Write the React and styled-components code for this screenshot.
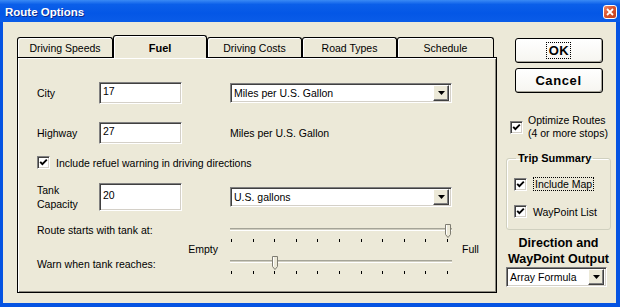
import styled, { createGlobalStyle } from "styled-components";

const GlobalStyle = createGlobalStyle`
  html, body { margin: 0; padding: 0; }
  body {
    width: 620px;
    height: 307px;
    overflow: hidden;
    font-family: "Liberation Sans", Arial, sans-serif;
    font-size: 10.5px;
    color: #000;
  }
`;

const Window = styled.div`
  width: 620px;
  height: 307px;
  display: flex;
  flex-direction: column;
  background: #0553e2;
`;

const TitleBar = styled.div`
  height: 22px;
  flex: none;
  box-sizing: border-box;
  display: flex;
  align-items: center;
  justify-content: space-between;
  padding: 1px 3px 0 5px;
  background: linear-gradient(180deg, #3a8af5 0%, #0b5fe9 20%, #0457e6 60%, #0a5ce8 100%);
  color: #fff;
  font-weight: bold;
  font-size: 11.5px;
  text-shadow: 1px 1px 0 #0b2a8f;
`;

const CloseButton = styled.div`
  width: 14px;
  height: 14px;
  box-sizing: border-box;
  border: 1px solid #fff;
  border-radius: 3px;
  background: linear-gradient(135deg, #f08a6a 0%, #d9542e 45%, #c23f1c 100%);
  display: flex;
  align-items: center;
  justify-content: center;
`;

const Frame = styled.div`
  flex: 1;
  min-height: 0;
  display: flex;
  padding: 0 4px 4px 3px;
`;

const Body = styled.div`
  flex: 1;
  background: #ece9d8;
  display: flex;
  align-items: flex-start;
  padding: 13px 0 0 14px;
`;

/* tab control */
const TabControl = styled.div`
  width: 480px;
  display: flex;
  flex-direction: column;
`;

const TabStrip = styled.div`
  height: 22px;
  display: flex;
  align-items: flex-end;
`;

const Tab = styled.div`
  position: relative;
  z-index: ${p => (p.$active ? 2 : 1)};
  width: ${p => p.$w}px;
  height: ${p => (p.$active ? 23 : 20)}px;
  margin-bottom: ${p => (p.$active ? -1 : 0)}px;
  box-sizing: border-box;
  border: 1px solid #000;
  border-bottom: none;
  border-radius: 3px 3px 0 0;
  box-shadow: inset 1px 1px 0 #fff;
  background: #ece9d8;
  display: flex;
  align-items: center;
  justify-content: center;
  padding-top: ${p => (p.$active ? 1 : 0)}px;
  font-weight: ${p => (p.$active ? "bold" : "normal")};
  font-size: ${p => (p.$active ? "11px" : "10.5px")};
`;

const Panel = styled.div`
  height: 236px;
  box-sizing: border-box;
  border: 1px solid #000;
  box-shadow: inset 1px 1px 0 #fff, inset -1px -1px 0 #8d8b80;
  padding: 24px 0 0 19px;
`;

const Row = styled.div`
  display: grid;
  grid-template-columns: 62px 83px 48px 222px;
  align-items: center;
  height: ${p => p.$h || 22}px;
  margin-top: ${p => p.$mt || 0}px;
`;

const Label = styled.span`
  line-height: 14px;
`;

const TextInput = styled.input`
  width: 83px;
  height: 100%;
  margin: 0;
  box-sizing: border-box;
  border: 1px solid;
  border-color: #808080 #fff #fff #808080;
  box-shadow: inset 1px 1px 0 #404040, inset -1px -1px 0 #d4d0c8;
  background: #fff;
  font: inherit;
  color: #000;
  padding: 0 3px 5px;
  outline: none;
`;

const SelectBox = styled.div`
  width: ${p => p.$w}px;
  height: 20px;
  box-sizing: border-box;
  border: 1px solid;
  border-color: #808080 #fff #fff #808080;
  box-shadow: inset 1px 1px 0 #404040, inset -1px -1px 0 #d4d0c8;
  background: #fff;
  display: flex;
  align-items: center;
  padding: 2px;
`;

const SelectText = styled.span`
  flex: 1;
  padding-left: 1px;
  white-space: nowrap;
  overflow: hidden;
`;

const DropButton = styled.span`
  width: 16px;
  height: 16px;
  box-sizing: border-box;
  background: #ece9d8;
  border: 1px solid;
  border-color: #fff #404040 #404040 #fff;
  box-shadow: inset -1px -1px 0 #808080;
  display: flex;
  align-items: center;
  justify-content: center;
`;

const PlainText = styled.span`
  white-space: nowrap;
`;

const CheckRow = styled.div`
  display: flex;
  align-items: center;
  gap: ${p => p.$gap || 6}px;
  margin-top: ${p => p.$mt || 0}px;
  padding-left: ${p => p.$pl || 0}px;
`;

const CheckBoxBox = styled.span`
  flex: none;
  width: 13px;
  height: 13px;
  box-sizing: border-box;
  border: 1px solid;
  border-color: #808080 #fff #fff #808080;
  box-shadow: inset 1px 1px 0 #404040, inset -1px -1px 0 #d4d0c8;
  background: #fff;
  display: flex;
  align-items: center;
  justify-content: center;
`;

const FocusText = styled.span`
  border: 1px dotted #000;
  padding: 0 1px;
  line-height: 12px;
`;

const TwoLine = styled.span`
  line-height: 13px;
`;

/* sliders */
const SliderGrid = styled.div`
  display: grid;
  grid-template-columns: 193px 222px 1fr;
  grid-template-rows: 19px 13px 19px;
  margin-top: 18px;
`;

const SliderLabel = styled.span`
  align-self: start;
  line-height: 13px;
  margin-top: ${p => p.$mt || 0}px;
`;

const EndLabel = styled.span`
  align-self: end;
  line-height: 13px;
  justify-self: ${p => (p.$right ? "end" : "start")};
  padding: ${p => (p.$right ? "0 12px 0 0" : "0 0 0 10px")};
`;

const SliderBox = styled.div`
  position: relative;
  padding-top: 4px;
`;

const Track = styled.div`
  width: 222px;
  height: 1px;
  border-top: 1px solid #a5a497;
  border-bottom: 1px solid #fff;
  background: #cfcdc0;
`;

const Thumb = styled.div`
  position: absolute;
  top: 0;
  width: 6px;
  height: 14px;
  display: flex;
`;

const Ticks = styled.div`
  width: 217px;
  margin: 8px 0 0 1px;
  display: flex;
  justify-content: space-between;
`;

const Tick = styled.span`
  width: 1px;
  height: 3px;
  background: #000;
`;

/* right column */
const Side = styled.div`
  width: 105px;
  margin-left: 9px;
  display: flex;
  flex-direction: column;
`;

const PushButton = styled.div`
  align-self: center;
  width: 88px;
  height: 25px;
  margin-top: ${p => p.$mt}px;
  box-sizing: border-box;
  border: 1px solid #000;
  border-radius: 3px;
  background: linear-gradient(180deg, #ffffff 0%, #f6f5f0 100%);
  box-shadow: inset -1px -1px 0 #a8a69a;
  display: flex;
  align-items: center;
  justify-content: center;
  font-weight: bold;
  font-size: 13px;
  letter-spacing: 0.6px;
`;

const FocusRect = styled.span`
  border: 1px dotted #000;
  padding: 1px 1px 1px 2px;
  line-height: 13px;
`;

const Group = styled.fieldset`
  margin: 12px 0 0 0;
  padding: 0 0 11px 7px;
  border: 1px solid #d0d0bf;
  border-radius: 3px;
  box-shadow: inset 1px 1px 0 #fff;
`;

const Legend = styled.legend`
  margin-left: 2px;
  padding: 0 2px;
  font-weight: bold;
  font-size: 11px;
  line-height: 13px;
`;

const OutputTitle = styled.div`
  margin-top: 5px;
  text-align: center;
  font-weight: bold;
  font-size: 12.5px;
  line-height: 16px;
`;

const Arrow = () => (
  <svg width="7" height="4" viewBox="0 0 7 4">
    <path d="M0 0H7L3.5 4Z" fill="#000" />
  </svg>
);

const Select = ({ w, children }) => (
  <SelectBox $w={w}>
    <SelectText>{children}</SelectText>
    <DropButton>
      <Arrow />
    </DropButton>
  </SelectBox>
);

const CheckBox = () => (
  <CheckBoxBox>
    <svg width="9" height="9" viewBox="0 0 9 9">
      <polyline points="1.2,3.8 3.4,6.2 7.8,1.6" fill="none" stroke="#000" strokeWidth="1.9" />
    </svg>
  </CheckBoxBox>
);

const Slider = ({ step }) => (
  <SliderBox>
    <Track />
    <Thumb style={{ left: step * 21.6 - 1.5 }}>
      <svg width="6" height="14" viewBox="0 0 6 14">
        <path d="M0.5 0.5H5.5V10.5L3 13.5L0.5 10.5Z" fill="#ece9d8" stroke="#7f7d72" />
        <path d="M1.5 1V10.3" stroke="#fff" />
      </svg>
    </Thumb>
    <Ticks>
      {Array.from({ length: 11 }).map((_, i) => (
        <Tick key={i} />
      ))}
    </Ticks>
  </SliderBox>
);

const tabs = [
  { name: "Driving Speeds", w: 96 },
  { name: "Fuel", w: 94, active: true },
  { name: "Driving Costs", w: 95 },
  { name: "Road Types", w: 95 },
  { name: "Schedule", w: 97 },
];

const App = () => {
  return (
    <Window>
      <GlobalStyle />
      <TitleBar>
        <span>Route Options</span>
        <CloseButton>
          <svg width="8" height="8" viewBox="0 0 8 8">
            <path d="M1 1L7 7M7 1L1 7" stroke="#fff" strokeWidth="1.8" />
          </svg>
        </CloseButton>
      </TitleBar>

      <Frame>
        <Body>
          <TabControl>
            <TabStrip>
              {tabs.map(t => (
                <Tab key={t.name} $w={t.w} $active={t.active}>
                  {t.name}
                </Tab>
              ))}
            </TabStrip>

            <Panel>
              <Row>
                <Label>City</Label>
                <TextInput readOnly defaultValue="17" />
                <span />
                <Select w={222}>Miles per U.S. Gallon</Select>
              </Row>

              <Row $mt={18}>
                <Label>Highway</Label>
                <TextInput readOnly defaultValue="27" />
                <span />
                <PlainText>Miles per U.S. Gallon</PlainText>
              </Row>

              <CheckRow $mt={12}>
                <CheckBox />
                <span>Include refuel warning in driving directions</span>
              </CheckRow>

              <Row $mt={14} $h={23}>
                <Label>
                  Tank
                  <br />
                  Capacity
                </Label>
                <TextInput readOnly defaultValue="20" />
                <span />
                <Select w={222}>U.S. gallons</Select>
              </Row>

              <SliderGrid>
                <SliderLabel>Route starts with tank at:</SliderLabel>
                <Slider step={10} />
                <span />

                <EndLabel $right>Empty</EndLabel>
                <span />
                <EndLabel>Full</EndLabel>

                <SliderLabel $mt={2}>Warn when tank reaches:</SliderLabel>
                <Slider step={2} />
                <span />
              </SliderGrid>
            </Panel>
          </TabControl>

          <Side>
            <PushButton $mt={3}>
              <FocusRect>OK</FocusRect>
            </PushButton>
            <PushButton $mt={5}>Cancel</PushButton>

            <CheckRow $mt={21} $pl={4} $gap={5}>
              <CheckBox />
              <TwoLine>
                Optimize Routes
                <br />
                (4 or more stops)
              </TwoLine>
            </CheckRow>

            <Group>
              <Legend>Trip Summary</Legend>
              <CheckRow $mt={12}>
                <CheckBox />
                <FocusText>Include Map</FocusText>
              </CheckRow>
              <CheckRow $mt={14}>
                <CheckBox />
                <span>WayPoint List</span>
              </CheckRow>
            </Group>

            <OutputTitle>
              Direction and
              <br />
              WayPoint Output
            </OutputTitle>
            <Select w={101}>Array Formula</Select>
          </Side>
        </Body>
      </Frame>
    </Window>
  );
};

export default App;
